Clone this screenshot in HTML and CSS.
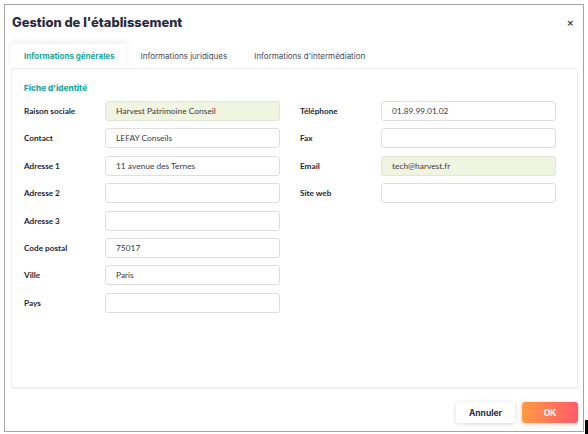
FILE: index.html
```html
<!DOCTYPE html>
<html lang="fr">
<head>
<meta charset="utf-8">
<title>Gestion de l'établissement</title>
<link rel="stylesheet" href="styles.css">
</head>
<body>
<div class="dialog">
  <div class="header">
    <h1 class="title">Gestion de l'établissement</h1>
    <span class="close">×</span>
  </div>
  <div class="tabs">
    <div class="tab active">Informations générales</div>
    <div class="tab">Informations juridiques</div>
    <div class="tab">Informations d'intermédiation</div>
  </div>
  <div class="panel">
    <div class="section-title">Fiche d'identité</div>
    <div class="form">
      <div class="col">
        <div class="row"><span class="label">Raison sociale</span><div class="input filled">Harvest Patrimoine Conseil</div></div>
        <div class="row"><span class="label">Contact</span><div class="input">LEFAY Conseils</div></div>
        <div class="row"><span class="label">Adresse 1</span><div class="input">11 avenue des Ternes</div></div>
        <div class="row"><span class="label">Adresse 2</span><div class="input"></div></div>
        <div class="row"><span class="label">Adresse 3</span><div class="input"></div></div>
        <div class="row"><span class="label">Code postal</span><div class="input">75017</div></div>
        <div class="row"><span class="label">Ville</span><div class="input">Paris</div></div>
        <div class="row"><span class="label">Pays</span><div class="input"></div></div>
      </div>
      <div class="col">
        <div class="row"><span class="label">Téléphone</span><div class="input">01.89.99.01.02</div></div>
        <div class="row"><span class="label">Fax</span><div class="input"></div></div>
        <div class="row"><span class="label">Email</span><div class="input filled">tech@harvest.fr</div></div>
        <div class="row"><span class="label">Site web</span><div class="input"></div></div>
      </div>
    </div>
  </div>
  <div class="footer">
    <button class="btn cancel">Annuler</button>
    <button class="btn ok">OK</button>
  </div>
</div>
<div class="edge"></div>
</body>
</html>
```
FILE: styles.css
```css
html, body {
  margin: 0;
  padding: 0;
  background: #ffffff;
}
body {
  width: 588px;
  height: 434px;
  position: relative;
  overflow: hidden;
  font-family: "Lato", "Liberation Sans", sans-serif;
}
.dialog {
  box-sizing: border-box;
  margin: 4px 0 0 4px;
  width: 580px;
  height: 428px;
  border: 1px solid #a4a4a4;
  background: #ffffff;
  padding: 0 5px 0 6px;
  display: flex;
  flex-direction: column;
}
.header {
  height: 39px;
  display: flex;
  align-items: flex-start;
  justify-content: space-between;
  padding: 9px 4px 0 1px;
  box-sizing: border-box;
}
.title {
  margin: 0;
  font-family: "Inter", "Liberation Sans", sans-serif;
  font-weight: 800;
  font-size: 12.9px;
  line-height: 18px;
  color: #2b2b3b;
}
.close {
  font-family: "DejaVu Sans", sans-serif;
  font-size: 9px;
  font-weight: 700;
  line-height: 12px;
  color: #3a3a3a;
  margin-top: 3px;
}
.tabs {
  height: 24px;
  display: flex;
}
.tab {
  padding: 0 13px;
  display: flex;
  align-items: center;
  font-family: "Inter", "Liberation Sans", sans-serif;
  font-size: 8px;
  color: #4a4a55;
  white-space: nowrap;
}
.tab.active {
  background: #ffffff;
  color: #1aa59b;
  font-weight: 700;
  border-radius: 3px 3px 0 0;
  box-shadow: 0 -3px 6px rgba(60, 60, 90, 0.08);
  padding: 0 12px 0 13px;
  position: relative;
  z-index: 1;
}
.tab + .tab {
  padding-left: 14px;
}
.panel {
  height: 321px;
  box-sizing: border-box;
  border: 1px solid #eceef4;
  border-bottom-width: 2px;
  border-radius: 0 3px 3px 3px;
  padding: 13px 12px 0 12px;
}
.section-title {
  font-family: "Inter", "Liberation Sans", sans-serif;
  font-size: 8.2px;
  font-weight: 800;
  color: #1aa59b;
  line-height: 12px;
  margin-bottom: 7px;
}
.form {
  display: flex;
  gap: 20px;
}
.col {
  width: 256px;
  display: flex;
  flex-direction: column;
  gap: 7.4px;
}
.row {
  display: flex;
  align-items: center;
  height: 20px;
}
.label {
  width: 81px;
  flex: none;
  font-weight: 700;
  font-size: 8.2px;
  color: #262630;
}
.input {
  box-sizing: border-box;
  width: 175px;
  height: 20px;
  border: 1px solid #dedede;
  border-radius: 3px;
  background: #ffffff;
  padding-left: 10px;
  display: flex;
  align-items: center;
  font-size: 8.4px;
  color: #3a3a46;
}
.input.filled {
  background: #f0f5e1;
  border-color: #e2e6d6;
}
.footer {
  flex: 1;
  display: flex;
  justify-content: flex-end;
  align-items: flex-start;
  padding-top: 13px;
  gap: 7px;
}
.btn {
  height: 21px;
  border: none;
  border-radius: 3px;
  font-family: "Inter", "Liberation Sans", sans-serif;
  font-size: 8.5px;
  font-weight: 700;
  padding: 0;
  cursor: pointer;
}
.cancel {
  width: 59px;
  background: #ffffff;
  color: #2b2b3b;
  box-shadow: 0 1px 4px rgba(40, 40, 80, 0.18);
}
.ok {
  width: 56px;
  background: linear-gradient(90deg, #ff9a44, #ff5b6b);
  color: #ffffff;
  box-shadow: 0 1px 4px rgba(255, 100, 90, 0.35);
}
.edge {
  position: absolute;
  right: 0;
  bottom: 0;
  width: 3px;
  height: 14px;
  background: #000000;
}
```
